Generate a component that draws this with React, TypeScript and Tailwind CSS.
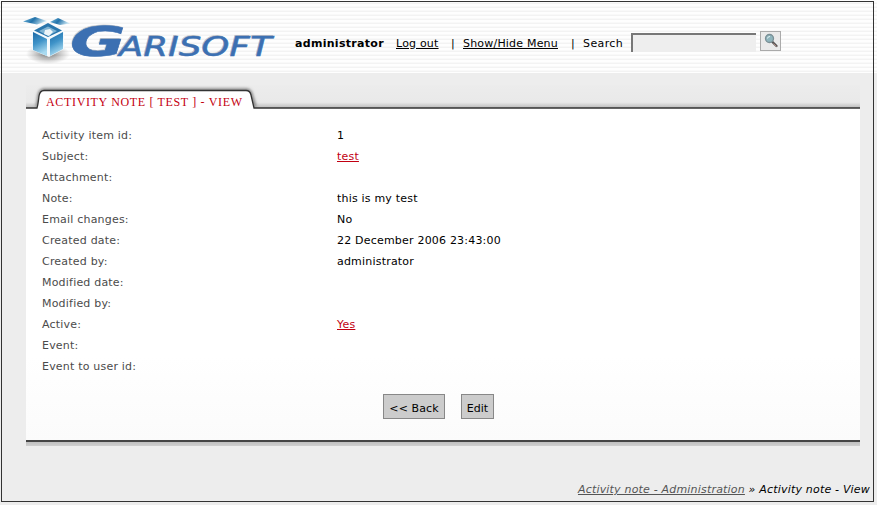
import React from "react";

const rows: { label: string; value?: string; link?: boolean }[] = [
  { label: "Activity item id:", value: "1" },
  { label: "Subject:", value: "test", link: true },
  { label: "Attachment:" },
  { label: "Note:", value: "this is my test" },
  { label: "Email changes:", value: "No" },
  { label: "Created date:", value: "22 December 2006 23:43:00" },
  { label: "Created by:", value: "administrator" },
  { label: "Modified date:" },
  { label: "Modified by:" },
  { label: "Active:", value: "Yes", link: true },
  { label: "Event:" },
  { label: "Event to user id:" },
];

function Logo() {
  return (
    <svg width="262" height="62" viewBox="14 8 262 62" className="block shrink-0">
      <defs>
        <linearGradient id="face" x1="0" y1="0" x2="0.3" y2="1">
          <stop offset="0" stopColor="#1c69a6" />
          <stop offset="0.5" stopColor="#3f93c8" />
          <stop offset="1" stopColor="#a9daf0" />
        </linearGradient>
        <linearGradient id="flap" x1="0" y1="0" x2="1" y2="0.3">
          <stop offset="0" stopColor="#7dbfe2" />
          <stop offset="0.5" stopColor="#2373aa" />
          <stop offset="1" stopColor="#c4e2f0" />
        </linearGradient>
        <radialGradient id="ground">
          <stop offset="0" stopColor="#555" stopOpacity="0.85" />
          <stop offset="1" stopColor="#888" stopOpacity="0" />
        </radialGradient>
      </defs>
      <ellipse cx="48" cy="54" rx="22" ry="10" fill="url(#ground)" />
      <path d="M32 31 48 23 64 31 64 49 49 57 32 50Z" fill="#f4fafd" />
      <path d="M34 30.5 48 23 62 30.5 48 37Z" fill="#2a76ac" />
      <path d="M39 31 48 26.5 57 31 48 36Z" fill="#7fb4d4" />
      <path d="M44 34 45 30 50 29 53 32 49 36Z" fill="#edf5f8" />
      <path d="M33 32 47 39 47 56 33 50Z" fill="url(#face)" />
      <path d="M63 32 50 39 50 56 63 49Z" fill="url(#face)" />
      <path d="M23 21.5 35 17 47 21 37 24.5Z" fill="url(#flap)" />
      <path d="M50 22 58 18 70 23.5 60 25Z" fill="url(#flap)" />
      <g fontFamily="'DejaVu Sans', sans-serif" fontStyle="italic">
        <g fill="#888" opacity="0.4" transform="translate(-1 -1)">
          <text x="70" y="56" fontSize="40" fontWeight="700" textLength="56" lengthAdjust="spacingAndGlyphs">G</text>
          <text x="119" y="56" fontSize="26" textLength="153" lengthAdjust="spacingAndGlyphs">ARISOFT</text>
        </g>
        <g fill="#3c70b2" stroke="#3c70b2" strokeWidth="0.5">
          <text x="70" y="56" fontSize="40" fontWeight="700" textLength="56" lengthAdjust="spacingAndGlyphs">G</text>
          <text x="119" y="56" fontSize="26" textLength="153" lengthAdjust="spacingAndGlyphs">ARISOFT</text>
        </g>
      </g>
    </svg>
  );
}

function Magnifier() {
  return (
    <svg width="17" height="17" viewBox="0 0 17 17" className="block shrink-0">
      <path d="m10 9.5 4.5 4.5" stroke="#555" strokeWidth="2.4" strokeLinecap="round" />
      <path d="m11.5 11.5 3 3" stroke="#b08a80" strokeWidth="1" />
      <circle cx="7.5" cy="6.5" r="4" fill="#8fb5bd" stroke="#7b8f95" strokeWidth="1.3" />
      <path d="M5.5 6.5Q5.5 4.5 8 4.5" stroke="#e1f2f3" fill="none" />
    </svg>
  );
}

export default function App() {
  return (
    <div className="h-[505px] w-[877px] overflow-hidden bg-[#ededed] font-['DejaVu_Sans',sans-serif] text-[11px] leading-[13px] tracking-[0.2px] text-black">
      <div className="h-full bg-[repeating-linear-gradient(#fefefe_0_2px,#f9f9f9_2px_3px,#f3f3f3_3px_4px)] bg-[length:100%_73px] bg-no-repeat pl-px pt-px">
        <div className="flex h-[501px] w-[873px] flex-col border border-[#333]">
          <header className="flex h-[71px] shrink-0 pl-3 pt-1.5">
            <Logo />
            <div className="ml-[19px] mt-[25px] flex h-5 items-center whitespace-nowrap">
              <b className="w-[101px] tracking-[0.3px]">administrator</b>
              <a className="w-[55px] underline underline-offset-1">Log out</a>
              <span className="w-3">|</span>
              <a className="w-[108px] underline underline-offset-1">Show/Hide Menu</a>
              <span className="w-3">|</span>
              <span className="w-12 tracking-[0.4px]">Search</span>
              <input className="-mt-0.5 h-[19px] w-[125px] border-l-2 border-t-2 border-[#777] bg-[#eee] outline-none" />
              <button className="-mt-[5px] ml-1 flex h-[20px] w-[21px] items-center justify-center border border-[#aaa] bg-[#eaeaea]">
                <Magnifier />
              </button>
            </div>
          </header>
          <main className="ml-6 mt-3 w-[834px]">
            <svg width="834" height="24" viewBox="0 0 834 24" className="block">
              <defs>
                <linearGradient id="bar" x2="0" y2="1">
                  <stop stopColor="#ececec" />
                  <stop offset="0.75" stopColor="#e9e9e9" />
                  <stop offset="1" stopColor="#bababa" />
                </linearGradient>
                <filter id="soft" x="-5%" y="-50%" width="110%" height="200%">
                  <feGaussianBlur stdDeviation="1.5" />
                </filter>
              </defs>
              <rect width="834" height="23" fill="url(#bar)" />
              <path d="M11 22Q12 20 13 11 14 5 18 5H220Q224 5 225 9L229 22" fill="none" stroke="#777" strokeWidth="3" filter="url(#soft)" />
              <path d="M0 24V23H11Q12 20 13 11 14 5.5 18 5.5H220Q224 5.5 225 10L228 23H834V24Z" fill="#fff" />
              <path d="M0 23H11Q12 20 13 11 14 5.5 18 5.5H220Q224 5.5 225 10L228 23H834" fill="none" stroke="#333" strokeWidth="1.3" />
              <text x="20" y="21" fontFamily="'Liberation Serif', serif" fontSize="12" letterSpacing="0" fill="#c40011" textLength="196">ACTIVITY NOTE [ TEST ] - VIEW</text>
            </svg>
            <section className="h-[331px] bg-[linear-gradient(#fff_75%,#fbfbfb)] pt-4">
              {rows.map((row) => (
                <div key={row.label} className="flex h-[21px] items-center pl-4">
                  <span className="w-[295px] text-[#4b4b4b]">{row.label}</span>
                  <span className={row.link ? "text-[#c20012] underline underline-offset-1" : ""}>{row.value}</span>
                </div>
              ))}
              <div className="mt-[17px] flex gap-4 pl-[357px]">
                <button className="h-[25px] w-[62px] whitespace-nowrap border border-[#888] bg-[#ccc] pt-[3px] tracking-[0.1px]">&lt;&lt; Back</button>
                <button className="h-[25px] w-[33px] border border-[#888] bg-[#ccc] pt-[3px] tracking-normal">Edit</button>
              </div>
            </section>
            <div className="h-[6px] border-t-2 border-[#444] bg-[linear-gradient(#bfbfbf,#cfcfcf)]" />
          </main>
          <footer className="mt-[37px] flex justify-end pr-[3px] tracking-[0.19px] italic">
            <a className="text-[#555] underline underline-offset-1">Activity note - Administration</a>
            <span className="whitespace-pre"> » Activity note - View</span>
          </footer>
        </div>
      </div>
    </div>
  );
}
